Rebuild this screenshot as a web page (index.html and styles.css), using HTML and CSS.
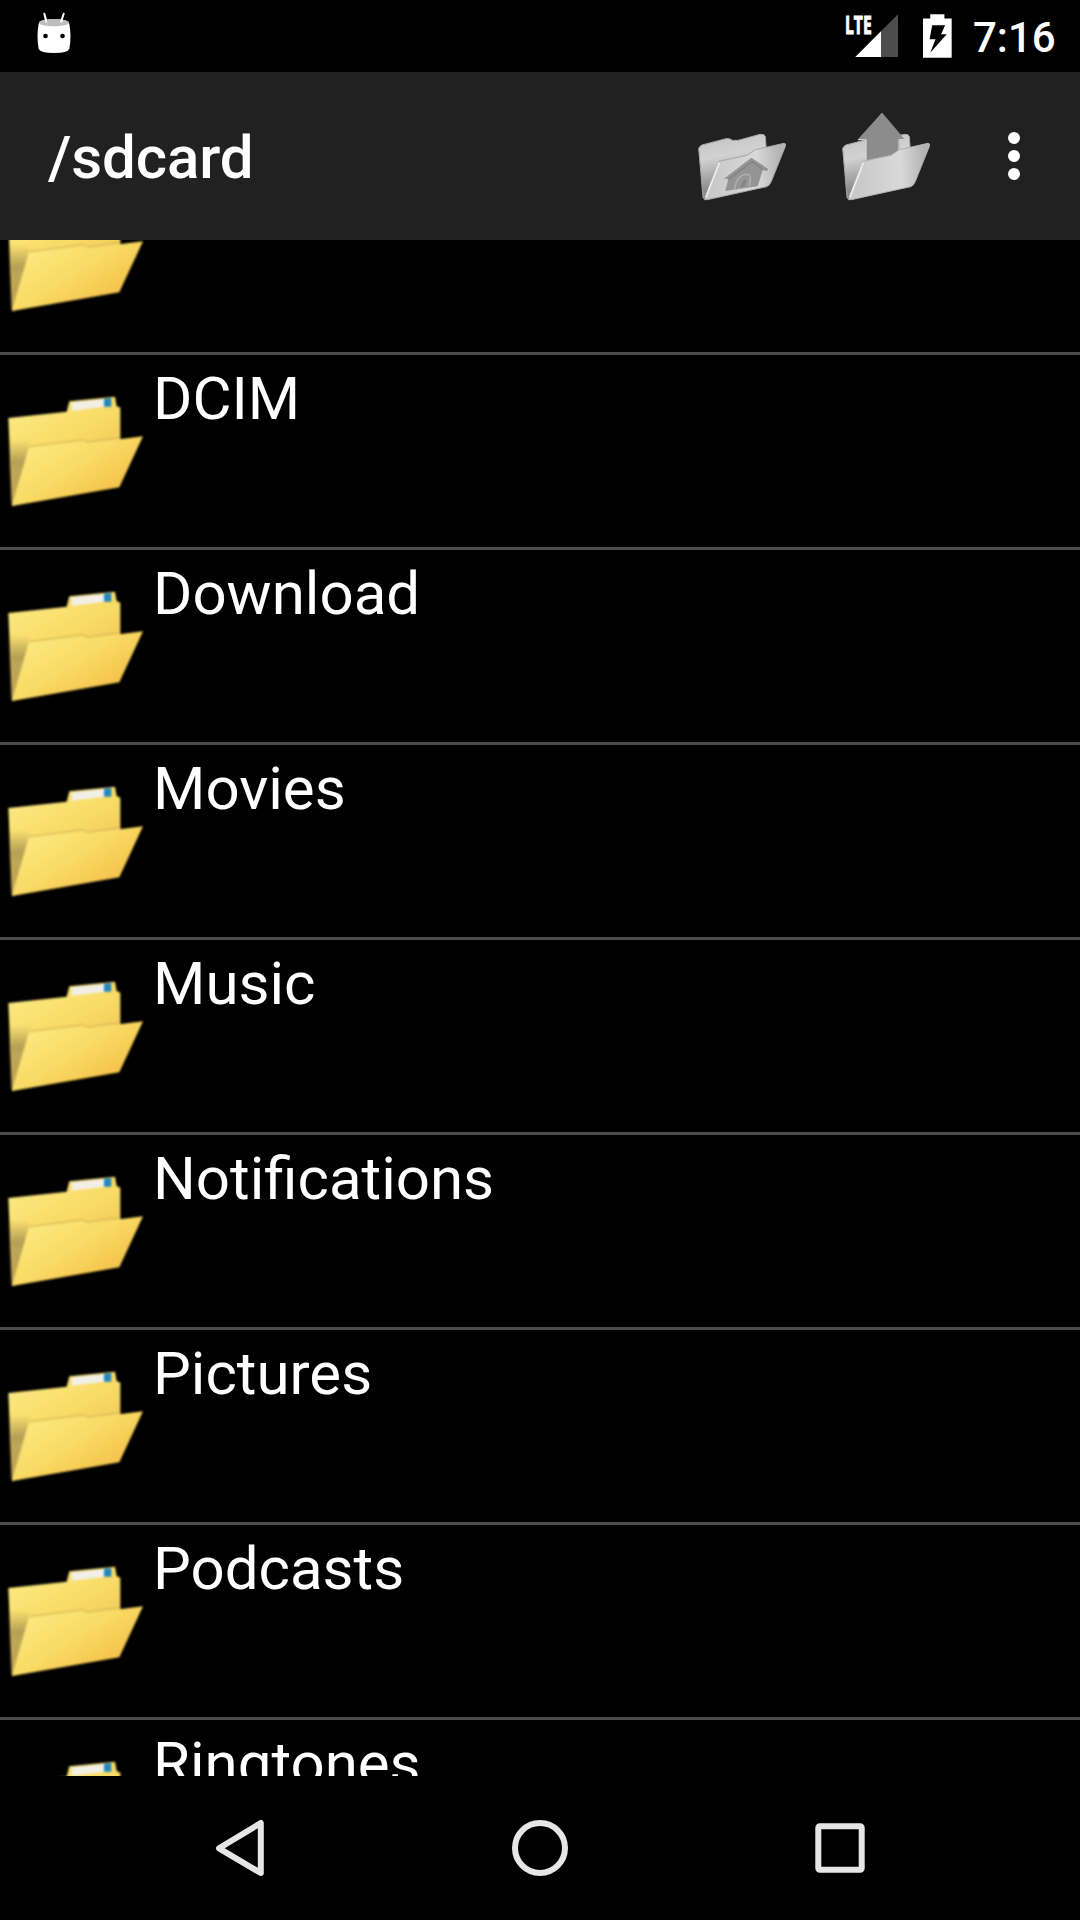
FILE: index.html
```html
<!DOCTYPE html>
<html lang="en">
<head>
<meta charset="utf-8">
<title>/sdcard</title>
<link rel="stylesheet" href="styles.css">
</head>
<body>
<svg class="sprite" aria-hidden="true">
  <defs>
    <linearGradient id="back" gradientUnits="userSpaceOnUse" x1="80" y1="70" x2="230" y2="330">
      <stop offset="0" stop-color="#fbe981"/><stop offset=".5" stop-color="#f9db65"/><stop offset="1" stop-color="#f0c454"/>
    </linearGradient>
    <linearGradient id="shade" gradientUnits="userSpaceOnUse" x1="0" y1="180" x2="0" y2="270">
      <stop offset="0" stop-color="#83744b" stop-opacity="0"/><stop offset=".75" stop-color="#83744b" stop-opacity=".6"/><stop offset="1" stop-color="#83744b" stop-opacity=".5"/>
    </linearGradient>
    <linearGradient id="front" gradientUnits="userSpaceOnUse" x1="130" y1="180" x2="250" y2="370">
      <stop offset="0" stop-color="#fbe87c"/><stop offset=".55" stop-color="#f9da64"/><stop offset="1" stop-color="#f5c64f"/>
    </linearGradient>
    <linearGradient id="grayBack" gradientUnits="userSpaceOnUse" x1="100" y1="110" x2="130" y2="260">
      <stop offset="0" stop-color="#c4c4c4"/><stop offset=".4" stop-color="#d2d2d2"/><stop offset="1" stop-color="#8c8c8c"/>
    </linearGradient>
    <linearGradient id="grayFront" gradientUnits="userSpaceOnUse" x1="100" y1="200" x2="300" y2="190">
      <stop offset="0" stop-color="#c9c9c9"/><stop offset=".65" stop-color="#d9d9d9"/><stop offset="1" stop-color="#b4b4b4"/>
    </linearGradient>
    <filter id="soft" x="-5%" y="-5%" width="110%" height="110%" color-interpolation-filters="sRGB"><feGaussianBlur stdDeviation="3.6"/></filter>
    <filter id="softShade" color-interpolation-filters="sRGB"><feGaussianBlur stdDeviation="4"/></filter>
    <filter id="softGray" x="-5%" y="-5%" width="110%" height="110%" color-interpolation-filters="sRGB"><feGaussianBlur stdDeviation="1.8"/></filter>
  </defs>
  <symbol id="folder" viewBox="0 -75 459 576">
    <g filter="url(#soft)">
      <path fill="url(#back)" d="M25 114L200 95L208 64L345 50L350 78L361 83V190L340 300L36 378Z"/>
      <path fill="url(#shade)" d="M28 170L88 180L88 215L38 375L34 374Z" filter="url(#softShade)"/>
      <path fill="#f2efe7" d="M216 67L314 57V80L216 92Z"/>
      <path fill="#2386bd" d="M312 56L334 54V80H312Z"/>
      <path fill="none" stroke="#cfb457" stroke-width="3" d="M90 199L250 179L262 186L357 173"/>
      <path fill="url(#front)" d="M86 204L250 183L263 190L429 169L358 322L36 378Z"/>
    </g>
  </symbol>
  <symbol id="gray-back" viewBox="0 0 280 270">
    <path fill="url(#grayBack)" stroke="#a6a6a6" stroke-width="3" d="M56 146Q58 139 66 135L138 116Q150 114 157 121L175 121L240 103Q254 101 256 110L259 150L220 245L76 298Q70 298 69 291Z"/>
  </symbol>
</svg>

<header class="status-bar">
  <svg class="debug-icon" viewBox="0 0 108 126">
    <path fill="none" stroke="#fff" stroke-width="6" stroke-linecap="round" d="M25 8L30 28M83 8L77 28"/>
    <path fill="#fff" d="M8 38Q10 26 54 24Q98 26 100 38Q107 76 100 113Q96 126 54 126Q13 126 8 113Q1 76 8 38Z"/>
    <ellipse cx="54" cy="35" rx="45" ry="11" fill="#bdbdbd"/>
    <path fill="none" stroke="#fff" stroke-width="6" stroke-linecap="round" d="M29 23L31 32M78 23L76 32"/>
    <circle cx="28.500" cy="75" r="7"/><circle cx="79.500" cy="75" r="7"/>
  </svg>
  <div class="status-right">
    <svg class="signal" viewBox="0 0 162 132">
      <path fill="#4d4d4d" d="M159 1V129H31Z"/>
      <path fill="#fff" d="M108 52V129H31Z"/>
      <text class="lte" x="0" y="59" textLength="80" lengthAdjust="spacingAndGlyphs">LTE</text>
    </svg>
    <svg class="battery" viewBox="0 0 88 132">
      <path fill="#fff" d="M22 0H65V13H87V132H0V13H22Z"/>
      <path d="M28 33H67L55 61H72L22 117L38 76H20Z"/>
    </svg>
    <time class="clock">7:16</time>
  </div>
</header>

<div class="action-bar">
  <h1 class="title">/sdcard</h1>
  <div class="actions">
    <svg class="action-icon" viewBox="36 24 300 286">
      <g filter="url(#softGray)">
        <use href="#gray-back" width="280" height="270"/>
        <path fill="url(#grayFront)" stroke="#a7a7a7" stroke-width="3" d="M117 184L201 166L226 149L312 130Q319 130 316 139L274 244Q270 256 260 260L82 299H74Z"/>
        <path fill="none" stroke="#ededed" stroke-width="5" d="M118 188L77 293"/>
        <path fill="#949494" d="M132 236L214 173L264 206L262 213L248 211L233 259L136 273L145 237Z"/>
        <path fill="none" stroke="#828282" stroke-width="4" d="M145 238L216 185L248 208"/>
        <path fill="none" stroke="#acacac" stroke-width="5" d="M164 267Q169 224 203 223Q217 225 207 260"/>
        <path fill="#878787" stroke="#a0a0a0" stroke-width="3" d="M177 265Q184 235 200 234Q205 240 196 262Z"/>
      </g>
    </svg>
    <svg class="action-icon" viewBox="36 24 300 286">
      <g filter="url(#softGray)">
        <use href="#gray-back" width="280" height="270"/>
        <path fill="#8c8c8c" stroke="#9b9b9b" stroke-width="2" d="M174 39L242 119H226V190H127V119H102Z"/>
        <path fill="none" stroke="#dcdcdc" stroke-width="3" d="M102 119H126V180M242 119H225V150"/>
        <path fill="url(#grayFront)" stroke="#b2b2b2" stroke-width="3" d="M117 184L201 166L226 149L312 130Q319 130 316 139L274 244Q270 256 260 260L82 299H74Z"/>
        <path fill="none" stroke="#ededed" stroke-width="5" d="M118 188L77 293"/>
      </g>
    </svg>
    <svg class="overflow" viewBox="0 0 12 48" fill="#fff"><circle cx="6" cy="6" r="6"/><circle cx="6" cy="24" r="6"/><circle cx="6" cy="42" r="6"/></svg>
  </div>
</div>

<main class="list-view">
  <ul class="file-list">
    <li class="row"><svg class="folder"><use href="#folder"/></svg></li>
    <li class="row"><svg class="folder"><use href="#folder"/></svg><span class="name">DCIM</span></li>
    <li class="row"><svg class="folder"><use href="#folder"/></svg><span class="name">Download</span></li>
    <li class="row"><svg class="folder"><use href="#folder"/></svg><span class="name">Movies</span></li>
    <li class="row"><svg class="folder"><use href="#folder"/></svg><span class="name">Music</span></li>
    <li class="row"><svg class="folder"><use href="#folder"/></svg><span class="name">Notifications</span></li>
    <li class="row"><svg class="folder"><use href="#folder"/></svg><span class="name">Pictures</span></li>
    <li class="row"><svg class="folder"><use href="#folder"/></svg><span class="name">Podcasts</span></li>
    <li class="row"><svg class="folder"><use href="#folder"/></svg><span class="name">Ringtones</span></li>
  </ul>
</main>

<nav class="nav-bar">
  <svg class="nav-icon" viewBox="0 0 60 60"><path d="M50.800 5V55L9 30.300Z"/></svg>
  <svg class="nav-icon" viewBox="0 0 60 60"><circle cx="30" cy="30" r="25"/></svg>
  <svg class="nav-icon" viewBox="0 0 60 60"><rect x="8.300" y="8.300" width="43.400" height="43.400" rx="1.500"/></svg>
</nav>
</body>
</html>
```
FILE: styles.css
```css
* {
  box-sizing: border-box;
}

body {
  margin: 0;
  width: 1080px;
  height: 1920px;
  display: flex;
  flex-direction: column;
  overflow: hidden;
  background: #000;
  color: #fff;
  font-family: Roboto, "Noto Sans", sans-serif;
}

svg {
  display: block;
  flex: none;
}

.sprite {
  width: 0;
  height: 0;
  position: absolute;
}

.status-bar {
  height: 72px;
  flex: none;
  display: flex;
  justify-content: space-between;
  padding: 11px 23px 0 36px;
}

.debug-icon {
  width: 36px;
  height: 42px;
}

.status-right {
  display: flex;
  padding-top: 3px;
}

.signal {
  width: 54px;
  height: 44px;
  overflow: visible;
}

.lte {
  font-family: "Open Sans", Roboto, sans-serif;
  font-size: 77px;
  font-weight: 700;
  fill: #fff;
  stroke: #fff;
  stroke-width: 3px;
}

.battery {
  width: 29px;
  height: 44px;
  margin: 0 21px 0 24px;
}

.clock {
  width: 84px;
  font-size: 42px;
  line-height: 48px;
  font-weight: 500;
  white-space: nowrap;
}

.action-bar {
  height: 168px;
  flex: none;
  display: flex;
  align-items: center;
  justify-content: space-between;
  padding: 0 60px 0 48px;
  background: #212121;
}

.title {
  margin: 0;
  padding-top: 4px;
  font-size: 60px;
  line-height: 70px;
  font-weight: 500;
  letter-spacing: -0.1px;
}

.actions {
  display: flex;
  align-items: center;
  gap: 44px;
}

.action-icon {
  width: 100px;
  height: 95.330px;
}

#gray-back {
  overflow: visible;
}

.overflow {
  width: 12px;
  height: 48px;
  margin-left: 28px;
}

.list-view {
  height: 1536px;
  flex: none;
  overflow: hidden;
}

.file-list {
  list-style: none;
  margin: -80px 0 0;
  padding: 0;
}

.row {
  height: 195px;
  display: flex;
  border-bottom: 3px solid #4c4c4c;
}

.folder {
  width: 153px;
  height: 192px;
}

.name {
  padding-top: 9px;
  font-size: 60px;
  line-height: 70px;
}

.nav-bar {
  height: 144px;
  flex: none;
  display: flex;
  justify-content: center;
  align-items: center;
  gap: 240px;
}

.nav-icon {
  width: 60px;
  height: 60px;
  fill: none;
  stroke: #e6e6e6;
  stroke-width: 6px;
  stroke-linejoin: round;
}
```
